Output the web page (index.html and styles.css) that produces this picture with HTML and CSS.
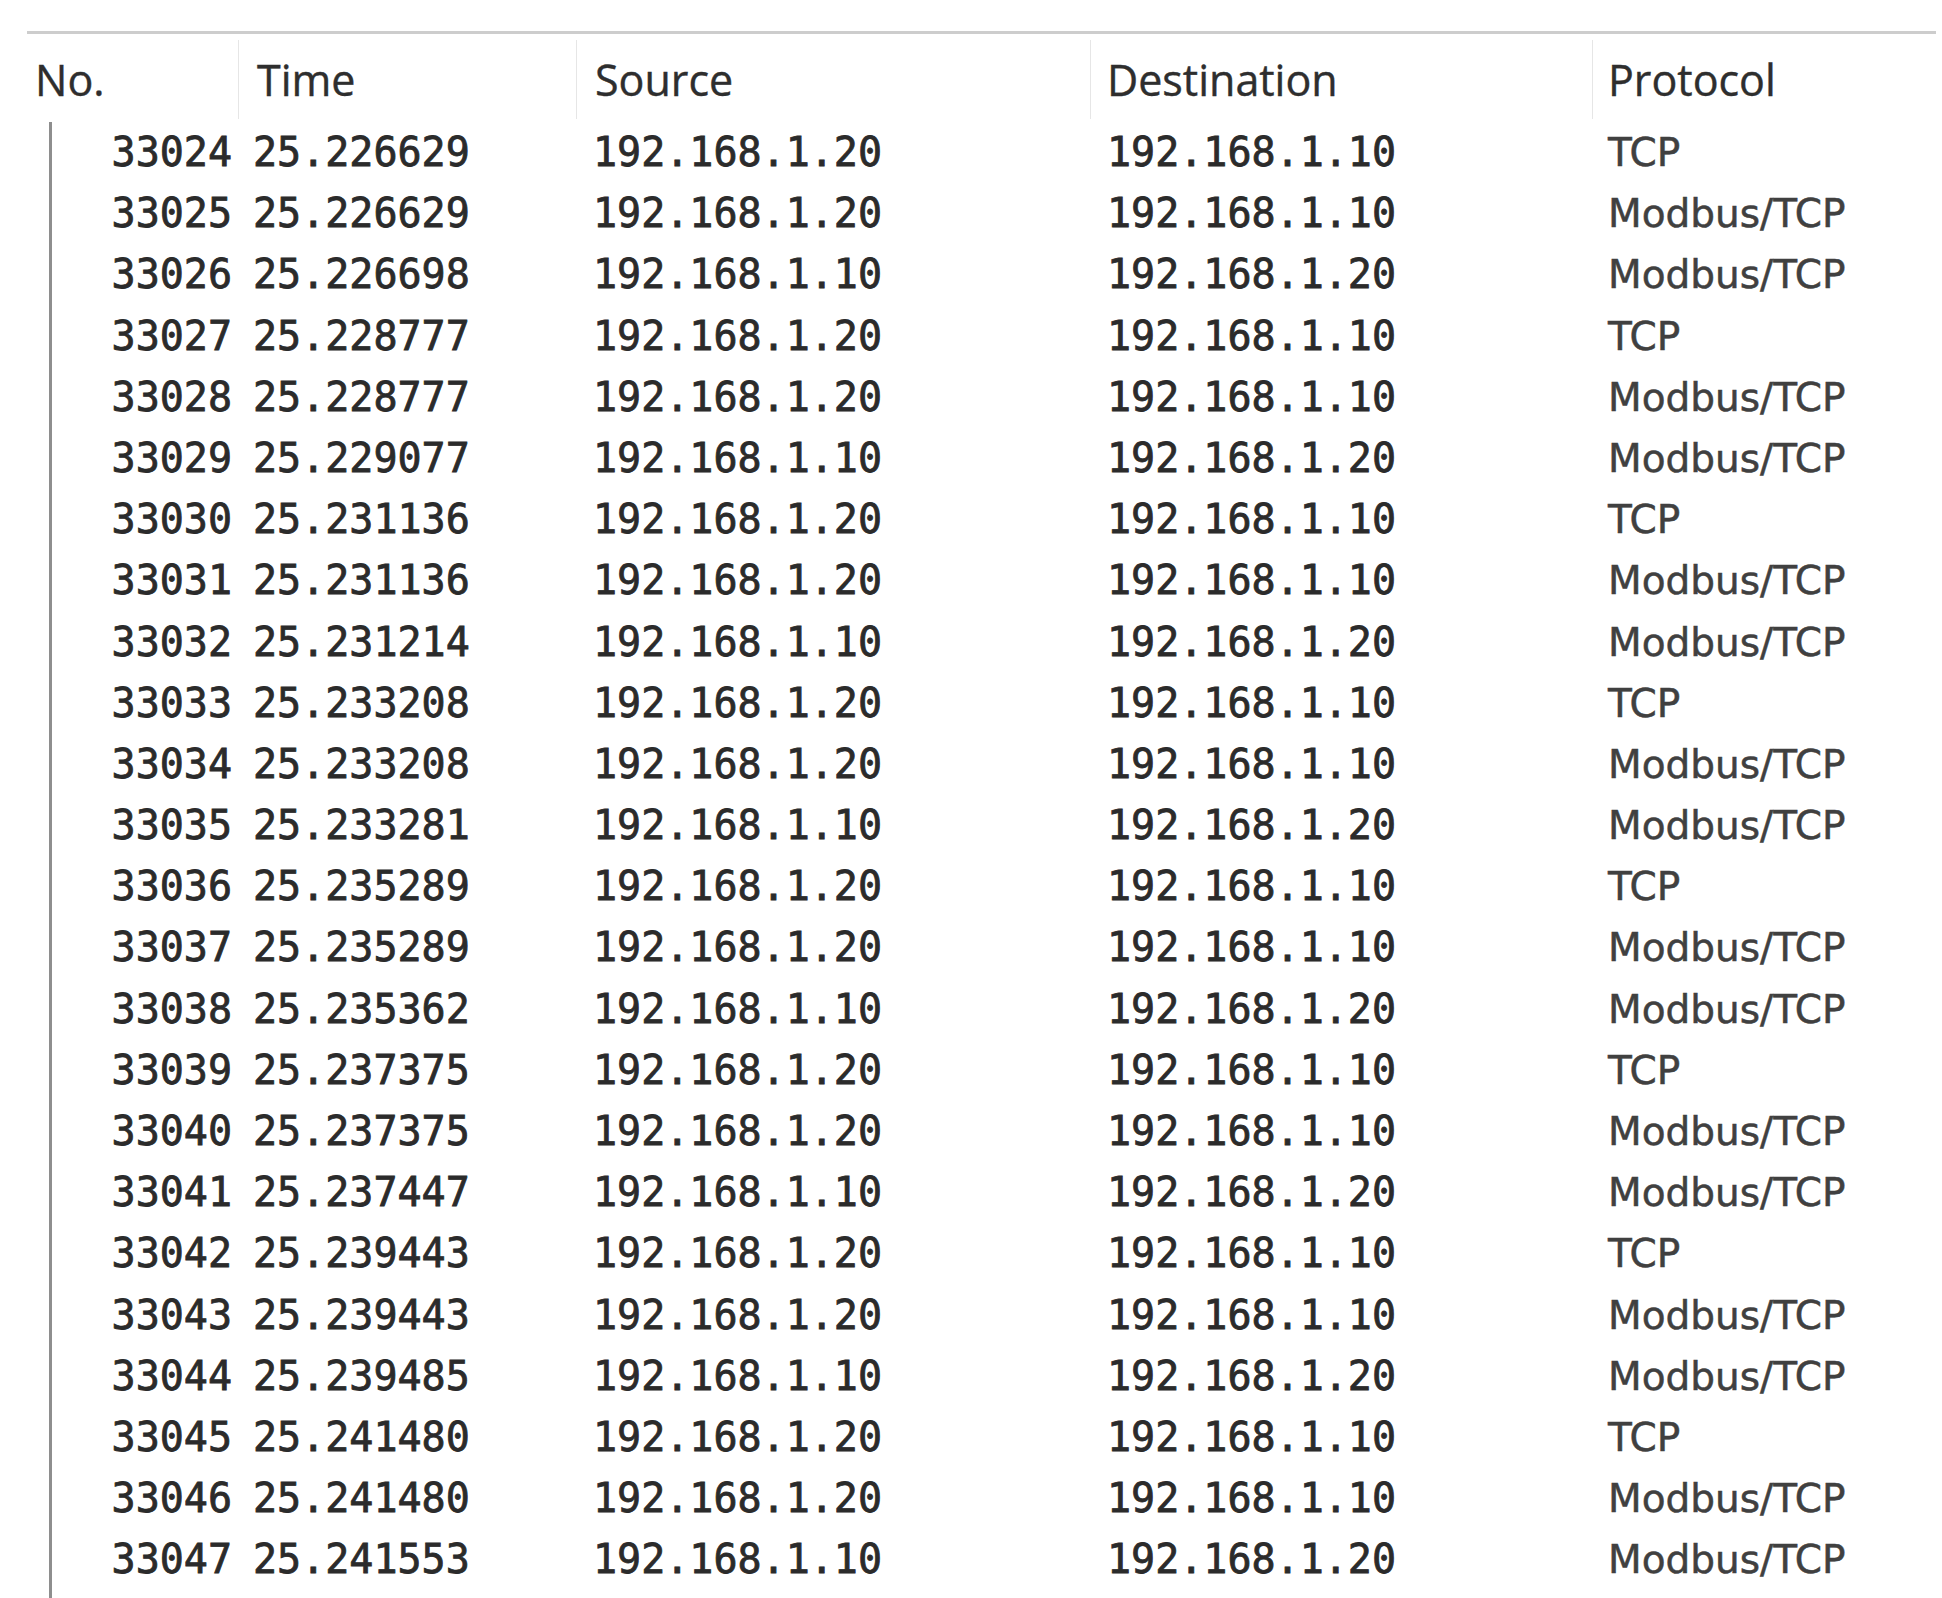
FILE: index.html
```html
<!DOCTYPE html>
<html>
<head>
<meta charset="utf-8">
<link rel="stylesheet" href="styles.css">
</head>
<body>
<div class="packets">
  <div class="head">
    <div class="hc c-no">No.</div>
    <div class="hc c-time sep">Time</div>
    <div class="hc c-src sep">Source</div>
    <div class="hc c-dst sep">Destination</div>
    <div class="hc c-proto sep">Protocol</div>
  </div>
  <div class="body">
    <div class="row"><span class="no">33024</span><span class="time">25.226629</span><span class="src">192.168.1.20</span><span class="dst">192.168.1.10</span><span class="proto">TCP</span></div>
    <div class="row"><span class="no">33025</span><span class="time">25.226629</span><span class="src">192.168.1.20</span><span class="dst">192.168.1.10</span><span class="proto">Modbus/TCP</span></div>
    <div class="row"><span class="no">33026</span><span class="time">25.226698</span><span class="src">192.168.1.10</span><span class="dst">192.168.1.20</span><span class="proto">Modbus/TCP</span></div>
    <div class="row"><span class="no">33027</span><span class="time">25.228777</span><span class="src">192.168.1.20</span><span class="dst">192.168.1.10</span><span class="proto">TCP</span></div>
    <div class="row"><span class="no">33028</span><span class="time">25.228777</span><span class="src">192.168.1.20</span><span class="dst">192.168.1.10</span><span class="proto">Modbus/TCP</span></div>
    <div class="row"><span class="no">33029</span><span class="time">25.229077</span><span class="src">192.168.1.10</span><span class="dst">192.168.1.20</span><span class="proto">Modbus/TCP</span></div>
    <div class="row"><span class="no">33030</span><span class="time">25.231136</span><span class="src">192.168.1.20</span><span class="dst">192.168.1.10</span><span class="proto">TCP</span></div>
    <div class="row"><span class="no">33031</span><span class="time">25.231136</span><span class="src">192.168.1.20</span><span class="dst">192.168.1.10</span><span class="proto">Modbus/TCP</span></div>
    <div class="row"><span class="no">33032</span><span class="time">25.231214</span><span class="src">192.168.1.10</span><span class="dst">192.168.1.20</span><span class="proto">Modbus/TCP</span></div>
    <div class="row"><span class="no">33033</span><span class="time">25.233208</span><span class="src">192.168.1.20</span><span class="dst">192.168.1.10</span><span class="proto">TCP</span></div>
    <div class="row"><span class="no">33034</span><span class="time">25.233208</span><span class="src">192.168.1.20</span><span class="dst">192.168.1.10</span><span class="proto">Modbus/TCP</span></div>
    <div class="row"><span class="no">33035</span><span class="time">25.233281</span><span class="src">192.168.1.10</span><span class="dst">192.168.1.20</span><span class="proto">Modbus/TCP</span></div>
    <div class="row"><span class="no">33036</span><span class="time">25.235289</span><span class="src">192.168.1.20</span><span class="dst">192.168.1.10</span><span class="proto">TCP</span></div>
    <div class="row"><span class="no">33037</span><span class="time">25.235289</span><span class="src">192.168.1.20</span><span class="dst">192.168.1.10</span><span class="proto">Modbus/TCP</span></div>
    <div class="row"><span class="no">33038</span><span class="time">25.235362</span><span class="src">192.168.1.10</span><span class="dst">192.168.1.20</span><span class="proto">Modbus/TCP</span></div>
    <div class="row"><span class="no">33039</span><span class="time">25.237375</span><span class="src">192.168.1.20</span><span class="dst">192.168.1.10</span><span class="proto">TCP</span></div>
    <div class="row"><span class="no">33040</span><span class="time">25.237375</span><span class="src">192.168.1.20</span><span class="dst">192.168.1.10</span><span class="proto">Modbus/TCP</span></div>
    <div class="row"><span class="no">33041</span><span class="time">25.237447</span><span class="src">192.168.1.10</span><span class="dst">192.168.1.20</span><span class="proto">Modbus/TCP</span></div>
    <div class="row"><span class="no">33042</span><span class="time">25.239443</span><span class="src">192.168.1.20</span><span class="dst">192.168.1.10</span><span class="proto">TCP</span></div>
    <div class="row"><span class="no">33043</span><span class="time">25.239443</span><span class="src">192.168.1.20</span><span class="dst">192.168.1.10</span><span class="proto">Modbus/TCP</span></div>
    <div class="row"><span class="no">33044</span><span class="time">25.239485</span><span class="src">192.168.1.10</span><span class="dst">192.168.1.20</span><span class="proto">Modbus/TCP</span></div>
    <div class="row"><span class="no">33045</span><span class="time">25.241480</span><span class="src">192.168.1.20</span><span class="dst">192.168.1.10</span><span class="proto">TCP</span></div>
    <div class="row"><span class="no">33046</span><span class="time">25.241480</span><span class="src">192.168.1.20</span><span class="dst">192.168.1.10</span><span class="proto">Modbus/TCP</span></div>
    <div class="row"><span class="no">33047</span><span class="time">25.241553</span><span class="src">192.168.1.10</span><span class="dst">192.168.1.20</span><span class="proto">Modbus/TCP</span></div>
  </div>
</div>
</body>
</html>
```
FILE: styles.css
```css
html, body {
  margin: 0;
  padding: 0;
  background: #ffffff;
}
body {
  height: 1598px;
  overflow: hidden;
}
.packets {
  padding-top: 31px;
  margin-left: 27px;
  margin-right: 6px;
}
.head {
  display: grid;
  grid-template-columns: 211px 338px 514px 502px 1fr;
  border-top: 3px solid #cdcdcd;
  height: 88px;
}
.hc {
  font-family: "Open Sans", "Noto Sans", sans-serif;
  font-size: 43px;
  color: #2e2e2e;
  -webkit-text-stroke: 0.4px #2e2e2e;
  display: flex;
  align-items: center;
  padding-top: 2px;
  padding-bottom: 2px;
  margin-top: 6px;
  margin-bottom: 3px;
}
.c-no { padding-left: 8px; }
.sep { border-left: 1px solid #e6e6e6; }
.c-time { padding-left: 18px; }
.c-src { padding-left: 18px; }
.c-dst { padding-left: 16px; }
.c-proto { padding-left: 15px; }

.body {
  margin-left: 22px;
  border-left: 3px solid #8e8e8e;
  min-height: 1500px;
}
.row {
  display: grid;
  grid-template-columns: 186px 338px 514px 502px 1fr;
  height: 61.2px;
  line-height: 61.2px;
  font-family: "DejaVu Sans Mono", "Liberation Mono", monospace;
  font-size: 40px;
  color: #2b2b2b;
  -webkit-text-stroke: 0.8px #2b2b2b;
  white-space: nowrap;
}
.no {
  text-align: right;
  padding-right: 6px;
}
.time { padding-left: 15px; }
.src { padding-left: 17px; }
.dst { padding-left: 17px; }
.proto {
  padding-left: 16px;
  font-family: "DejaVu Sans", "Verdana", sans-serif;
  font-size: 39px;
  color: #404040;
  -webkit-text-stroke: 0.5px #404040;
}
```
